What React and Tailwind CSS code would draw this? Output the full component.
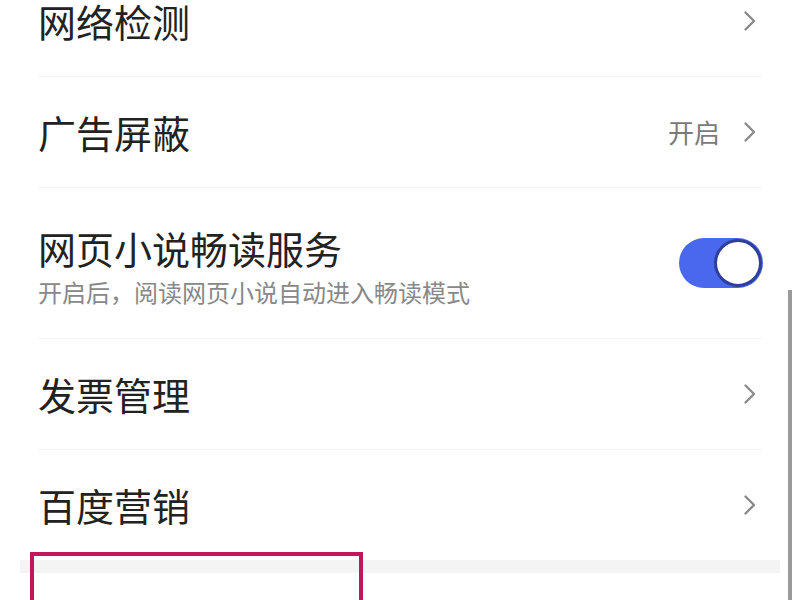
const font = { fontFamily: '"Noto Sans CJK SC", "Noto Sans", sans-serif' };

const Chevron = () => (
  <svg width="16" height="26" viewBox="0 0 16 26" fill="none" className="shrink-0">
    <path d="M3.5 4.5l8.5 8.5-8.5 8.5" stroke="#8a8a8a" strokeWidth="2.4" strokeLinecap="round" strokeLinejoin="round" />
  </svg>
);

const Divider = () => <div className="mx-[38px] h-px bg-[#f4f4f4]" />;

const Row = ({ title, value }) => (
  <div className="flex h-[110px] items-center justify-between pl-[38px] pr-[42px]">
    <span className="text-[38px] leading-none text-[#222]">{title}</span>
    <div className="flex items-center gap-[22px]">
      {value && <span className="text-[26px] leading-none text-[#7a7a7a]">{value}</span>}
      <Chevron />
    </div>
  </div>
);

const Toggle = () => (
  <div className="flex h-[50px] w-[84px] items-center justify-end rounded-full bg-[#4a68ee] pr-[1px]">
    <div className="h-[48px] w-[48px] rounded-full border-[3px] border-[#2d3f9a] bg-white" />
  </div>
);

export default function App() {
  return (
    <div className="relative h-[600px] w-[800px] overflow-hidden bg-white" style={font}>
      <div className="-mt-[34px]">
        <Row title="网络检测" />
        <Divider />
        <Row title="广告屏蔽" value="开启" />
        <Divider />
        <div className="flex h-[150px] items-center justify-between pl-[38px] pr-[37px]">
          <div className="flex flex-col gap-[13px] pt-[6px]">
            <span className="text-[38px] leading-none text-[#222]">网页小说畅读服务</span>
            <span className="text-[24px] leading-none text-[#888]">开启后，阅读网页小说自动进入畅读模式</span>
          </div>
          <Toggle />
        </div>
        <Divider />
        <Row title="发票管理" />
        <Divider />
        <Row title="百度营销" />
        <div className="mx-[20px] h-[13px] bg-[#f4f4f4]" />
        <div className="flex h-[110px] items-center pl-[38px]">
          <span className="pt-[50px] text-[38px] leading-none text-[#ddd]">个人信息</span>
        </div>
      </div>
      <div className="absolute left-[30px] top-[552px] h-[80px] w-[333px] border-[4px] border-[#c2185b]" />
      <div className="absolute right-[8px] top-[290px] h-[320px] w-[4px] bg-[#9a9a9a]" />
    </div>
  );
}
